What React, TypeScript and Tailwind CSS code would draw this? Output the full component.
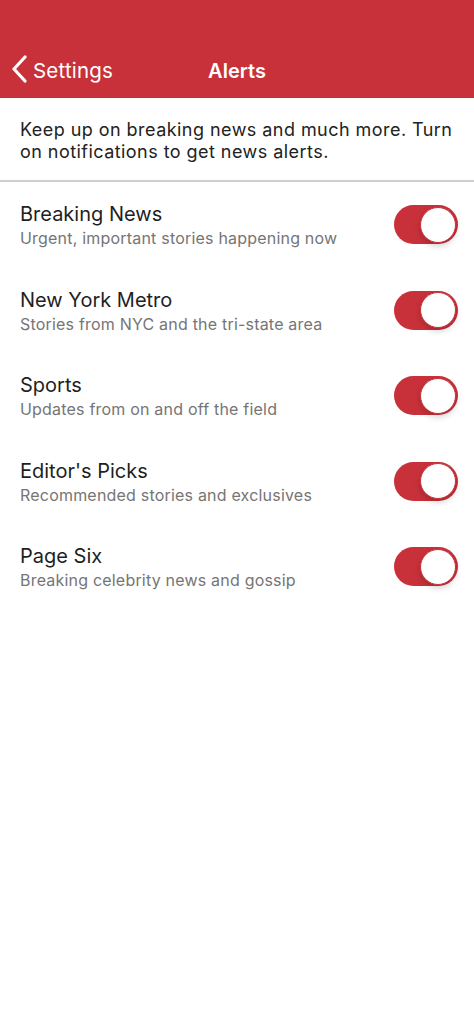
import React from "react";

const rows = [
  { title: "Breaking News", sub: "Urgent, important stories happening now" },
  { title: "New York Metro", sub: "Stories from NYC and the tri-state area" },
  { title: "Sports", sub: "Updates from on and off the field" },
  { title: "Editor's Picks", sub: "Recommended stories and exclusives" },
  { title: "Page Six", sub: "Breaking celebrity news and gossip" },
];

function Toggle() {
  return (
    <div className="relative w-[64px] h-[39px] rounded-full bg-[#c9313a] shrink-0">
      <div className="absolute right-[2px] top-[1.5px] w-[36px] h-[36px] rounded-full bg-white border border-[#c9313a] shadow-[0_3px_6px_rgba(0,0,0,0.18)]" />
    </div>
  );
}

export default function App() {
  return (
    <div
      className="w-[474px] min-h-[1025px] bg-white"
      style={{ fontFamily: "Inter, 'Noto Sans', sans-serif" }}
    >
      <div className="h-[98px] bg-[#c9313a] relative flex items-end pb-[15px]">
        <div className="flex items-center pl-[11px] text-white">
          <svg width="17" height="28" viewBox="0 0 17 28" fill="none">
            <path d="M14 2 L3 14 L14 26" stroke="white" strokeWidth="3.2" strokeLinecap="round" strokeLinejoin="round" />
          </svg>
          <span className="ml-[5px] mt-[3px] text-[20.5px] leading-[24px] tracking-[0.2px]">Settings</span>
        </div>
        <div className="absolute left-0 right-0 bottom-[15px] text-center text-white text-[20px] leading-[24px] font-semibold">
          Alerts
        </div>
      </div>
      <div className="pl-[20px] pr-[8px] pt-[21px] pb-[17px] text-[18px] leading-[22px] tracking-[0.45px] text-[#222] border-b-2 border-[#cfcfcf]">
        Keep up on breaking news and much more. Turn on notifications to get news alerts.
      </div>
      <div>
        {rows.map((r) => (
          <div key={r.title} className="h-[85.5px] flex items-start pl-[20px] pr-[16px] pt-[20px]">
            <div className="flex-1">
              <div className="text-[20px] leading-[24px] text-[#1f1f1f]">{r.title}</div>
              <div className="text-[16px] leading-[20px] tracking-[0.2px] text-[#757575] mt-[2px]">{r.sub}</div>
            </div>
            <div className="pt-[3px]">
              <Toggle />
            </div>
          </div>
        ))}
      </div>
    </div>
  );
}
